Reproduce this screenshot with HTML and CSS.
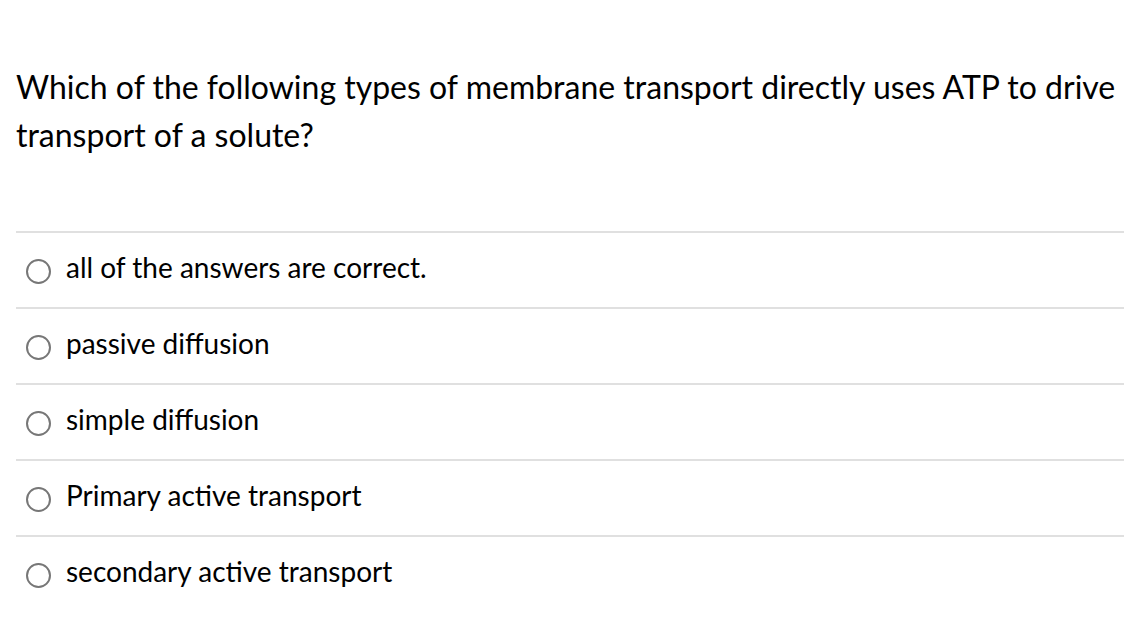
FILE: index.html
```html
<!DOCTYPE html>
<html>
<head>
<meta charset="utf-8">
<link rel="stylesheet" href="styles.css">
</head>
<body>
<div class="quiz">
  <p class="question">Which of the following types of membrane transport directly uses ATP to drive transport of a solute?</p>
  <ul class="answers">
    <li class="answer"><span class="radio"></span><span class="label">all of the answers are correct.</span></li>
    <li class="answer"><span class="radio"></span><span class="label">passive diffusion</span></li>
    <li class="answer"><span class="radio"></span><span class="label">simple diffusion</span></li>
    <li class="answer"><span class="radio"></span><span class="label">Primary active transport</span></li>
    <li class="answer"><span class="radio"></span><span class="label">secondary active transport</span></li>
  </ul>
</div>
</body>
</html>
```
FILE: styles.css
```css
html, body {
  margin: 0;
  padding: 0;
  background: #ffffff;
}
body {
  font-family: Lato, "Open Sans", sans-serif;
  color: #000000;
}
.quiz {
  padding: 63px 12px 0 16px;
}
.question {
  margin: 0;
  font-size: 32px;
  line-height: 48px;
}
.answers {
  list-style: none;
  margin: 72px 0 0 0;
  padding: 0;
  width: 1108px;
}
.answer {
  display: flex;
  align-items: center;
  height: 74px;
  border-top: 2px solid #e0e0e0;
}
.radio {
  width: 25px;
  height: 25px;
  border: 2px solid #777777;
  border-radius: 50%;
  box-sizing: border-box;
  margin: 2px 15px 0 10px;
  flex: none;
}
.label {
  font-size: 28px;
  padding-bottom: 6px;
}
```
